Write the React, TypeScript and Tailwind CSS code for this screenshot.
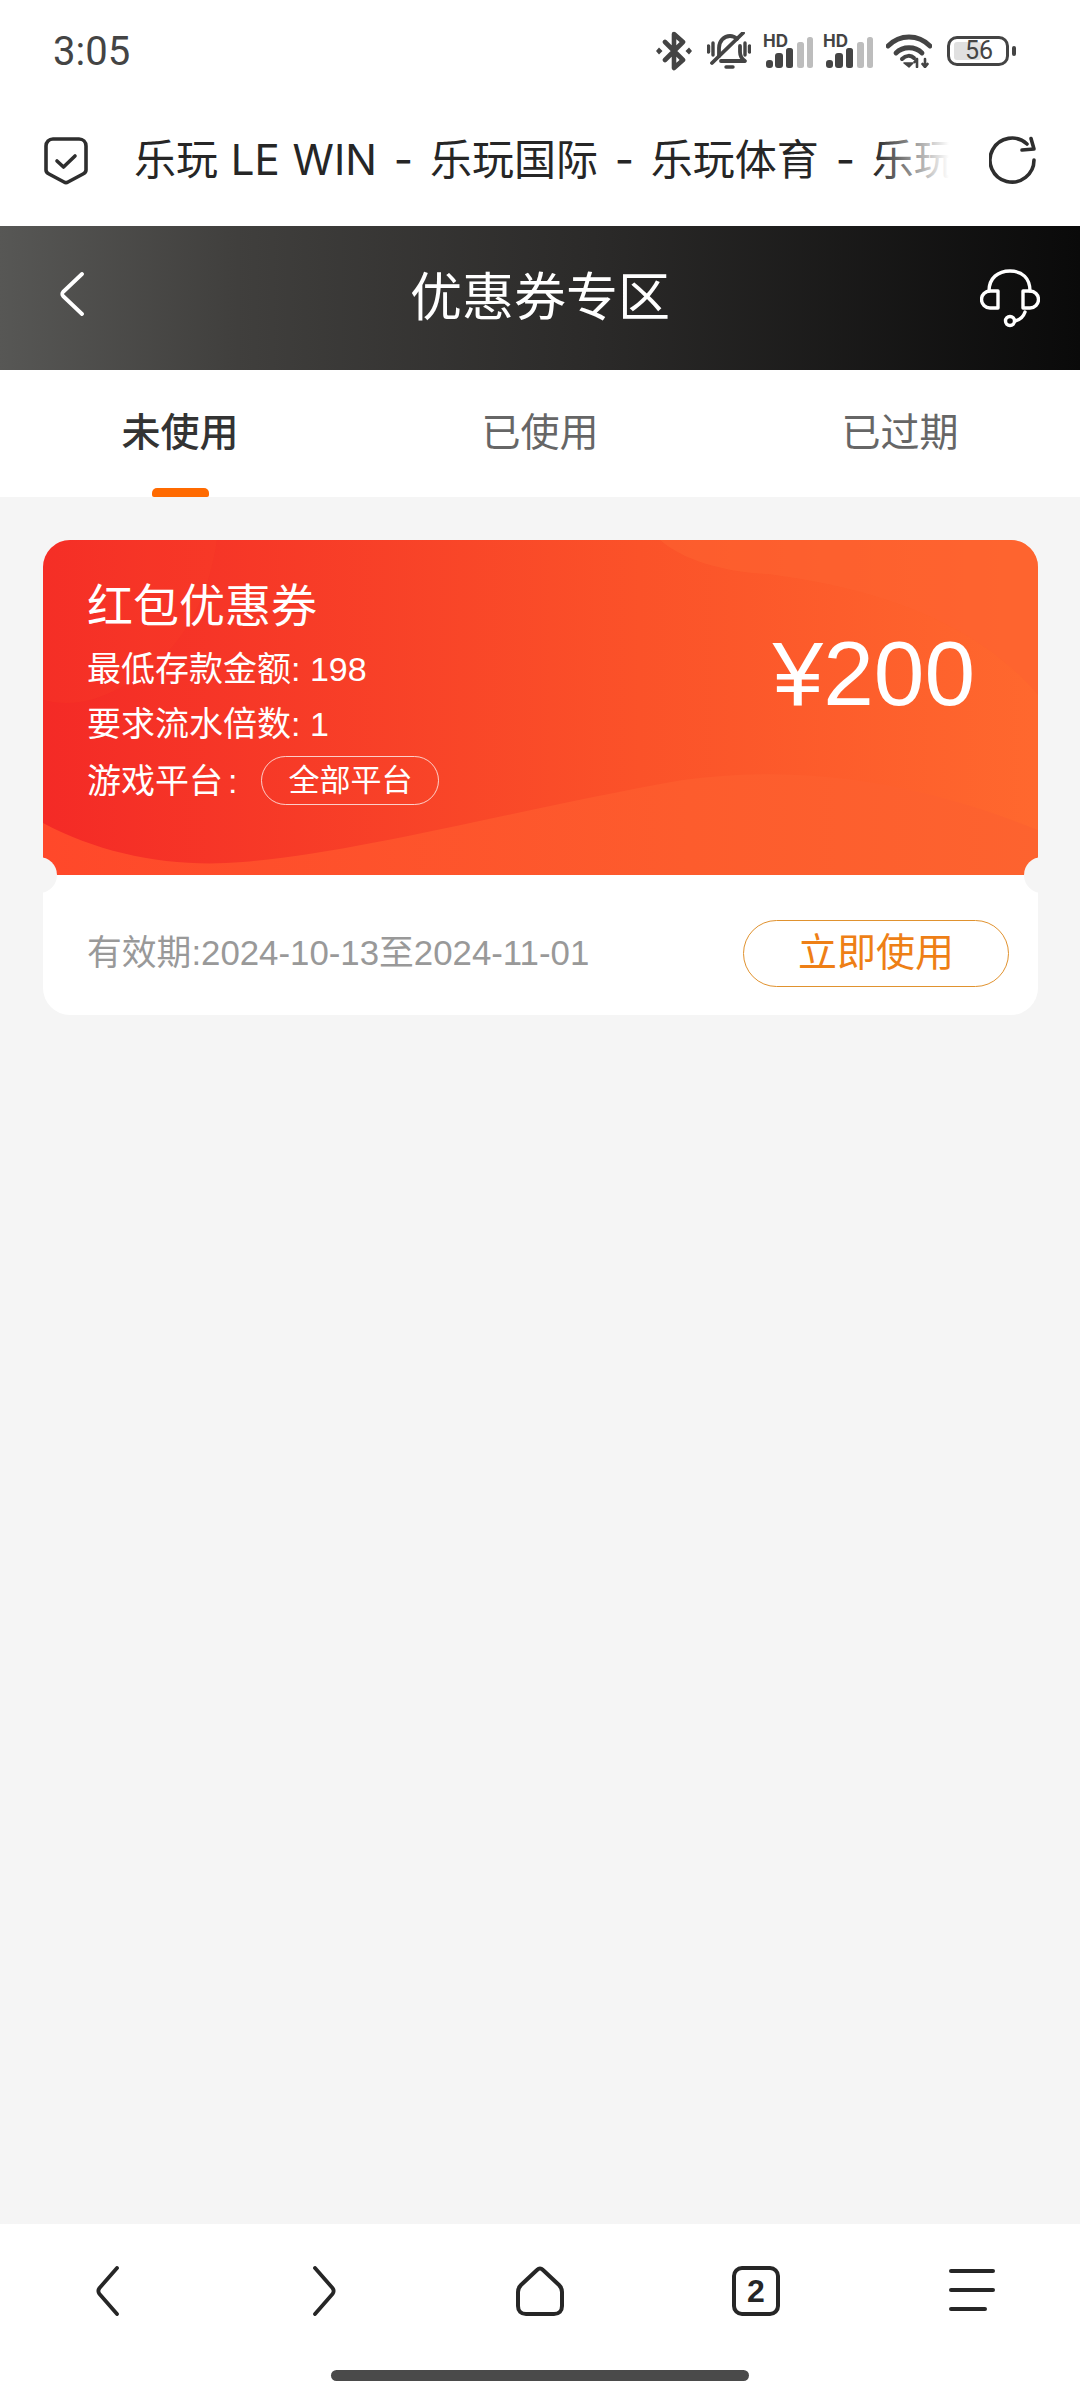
import React from "react";

const SANS = "font-['Liberation_Sans','Noto_Sans_CJK_SC',sans-serif]";

function Signal() {
  return (
    <div className="relative w-[50px] h-[33px]">
      <span className="absolute left-0 top-[-3px] text-[17px] leading-[18px] font-bold text-[#444] font-['Inter',sans-serif]">HD</span>
      <svg width="50" height="33" viewBox="0 0 50 33" className="absolute left-0 top-0">
        <rect x="3" y="25" width="7" height="8" rx="3" fill="#444" />
        <rect x="12" y="18" width="8" height="15" rx="3" fill="#444" />
        <rect x="23" y="13" width="7" height="20" rx="2.5" fill="#444" />
        <rect x="34" y="7" width="7" height="26" rx="2.5" fill="#bdbdbd" />
        <rect x="44" y="2" width="6" height="31" rx="2.5" fill="#bdbdbd" />
      </svg>
    </div>
  );
}

function StatusBar() {
  return (
    <div className="h-[100px] flex items-start justify-between bg-white pl-[53px] pr-[64px]">
      <span className="mt-[29px] text-[40px] leading-[46px] text-[#444] font-['Roboto',sans-serif]">3:05</span>
      <div className="flex items-center mt-[31px] h-[40px]">
        <svg width="36" height="40" viewBox="0 0 36 40" fill="none" stroke="#444" strokeWidth="4.6" strokeLinejoin="round" strokeLinecap="round">
          <path d="M9 11 L27 29 L18 37 V3 L27 11 L9 29" />
          <path d="M3 16.500 L6.500 20 L3 23.500 L0 20 Z M33 16.500 L36 20 L33 23.500 L29.500 20 Z" fill="#444" stroke="none" />
        </svg>
        <svg className="ml-[15px]" width="44" height="38" viewBox="0 0 44 38" fill="none" stroke="#444" strokeWidth="3.8" strokeLinecap="round" strokeLinejoin="round">
          <path d="M12 24 V16 C12 9 17 4 23 4 C26 4 28 5 30 7" />
          <path d="M33 14 V20 C33 24 35 27 38 29 H14" />
          <path d="M36 1 L5 31" strokeWidth="3.8" />
          <path d="M1.500 14 V20 M6 11 V23 M38 11 V23 M42.500 14 V20" strokeWidth="3.4" />
          <path d="M19 35 H26" strokeWidth="3.4" />
        </svg>
        <div className="ml-[12px]"><Signal /></div>
        <div className="ml-[10px]"><Signal /></div>
        <svg className="ml-[13px]" width="46" height="34" viewBox="0 0 46 34" fill="none" stroke="#444" strokeWidth="4.8" strokeLinecap="round">
          <path d="M2 12 C14 0 32 0 44 12" />
          <path d="M10 19 C17 12 29 12 36 19" />
          <path d="M16 25 C20 21 25 21 28 24" strokeWidth="4" />
          <path d="M23 33 L18 29 H27 Z" fill="#444" strokeWidth="1.500" strokeLinejoin="round" />
          <path d="M31 25 V33 M28.500 28 L31 25 M39 25 V33 M36.500 30 L39 33 L41.500 30" strokeWidth="2.6" />
        </svg>
        <div className="ml-[15px] relative w-[62px] h-[30px] rounded-[10px] border-[3px] border-[#444] flex items-center justify-center">
          <div className="absolute left-[4px] top-[3px] bottom-[3px] w-[27px] rounded-[3px] bg-[#e0e0e0]" />
          <span className="relative ml-[2px] text-[25px] leading-[26px] text-[#444] font-['Roboto',sans-serif]">56</span>
        </div>
        <div className="ml-[3px] w-[4px] h-[10px] rounded-[2px] bg-[#444]" />
      </div>
    </div>
  );
}

function AddressBar() {
  return (
    <div className="h-[126px] flex items-start bg-white pl-[44px]">
      <svg className="mt-[37px] shrink-0" width="44" height="48" viewBox="0 0 44 48" fill="none" stroke="#2e2e2e" strokeWidth="3.6" strokeLinecap="round" strokeLinejoin="round">
        <path d="M9 2 H35 C39 2 42 5 42 9 V33 C42 35 41 36 39 37 L24 45 C22.700 45.800 21.300 45.800 20 45 L5 37 C3 36 2 35 2 33 V9 C2 5 5 2 9 2 Z" />
        <path d="M13 24 L19.500 30 L31 19" />
      </svg>
      <div className="relative ml-[46px] w-[815px] h-[60px] mt-[30px] overflow-hidden shrink-0">
        <div className="whitespace-nowrap [word-spacing:5px] text-[42px] leading-[60px] text-[#262626] font-['Inter','Noto_Sans_CJK_SC',sans-serif]"><span className="[word-spacing:1px]">乐玩 LE WIN</span> - 乐玩国际 - 乐玩体育 - 乐玩</div>
        <div className="absolute right-0 top-0 bottom-0 w-[75px] bg-gradient-to-r from-transparent to-white" />
      </div>
      <svg className="ml-[40px] mt-[36px] shrink-0" width="48" height="48" viewBox="0 0 48 48" fill="none" stroke="#2e2e2e" strokeWidth="3.6" strokeLinecap="round" strokeLinejoin="round">
        <path d="M45 24 A22 22 0 1 1 38 8" />
        <path d="M33 14 L45 13 L42 2.500" />
      </svg>
    </div>
  );
}

function Header() {
  return (
    <div className="h-[144px] flex items-center justify-between pl-[60px] pr-[40px] bg-[linear-gradient(90deg,#575755_0%,#403f3d_22%,#2b2a29_55%,#0a0a0a_100%)]">
      <div className="w-[40px] mt-[-8px]">
        <svg className="block" width="24" height="44" viewBox="0 0 24 44" fill="none" stroke="#fff" strokeWidth="3.8" strokeLinecap="round" strokeLinejoin="round">
          <path d="M22 2 L3 20 C2 21 2 23 3 24 L22 42" />
        </svg>
      </div>
      <h1 className={`text-[52px] leading-[60px] text-white font-normal mt-[-1px] ${SANS}`}>优惠券专区</h1>
      <svg width="60" height="60" viewBox="0 0 60 60" fill="none" stroke="#fff" strokeWidth="3.4" strokeLinecap="round" strokeLinejoin="round">
        <path d="M18 23 H10 A8.500 8.500 0 0 0 10 40 H18 Z" />
        <path d="M43 23 H50 A8.500 8.500 0 0 1 50 40 H43 Z" />
        <path d="M9 23 C9 10 18 3 30 3 C42 3 50 10 50 23" />
        <path d="M45 44 C43 50 39 52 35 53" />
        <circle cx="30" cy="53" r="4.500" />
      </svg>
    </div>
  );
}

function Tabs() {
  const tab = "flex-1 flex flex-col items-center";
  return (
    <div className={`h-[127px] flex bg-white ${SANS}`}>
      <div className={tab}>
        <span className="mt-[39px] text-[39px] leading-[48px] font-medium text-[#333]">未使用</span>
        <span className="mt-[31px] w-[57px] h-[9px] rounded-t-[5px] rounded-b-[2px] bg-[#ff6a00]" />
      </div>
      <div className={tab}>
        <span className="mt-[39px] text-[39px] leading-[48px] text-[#666]">已使用</span>
      </div>
      <div className={tab}>
        <span className="mt-[39px] text-[39px] leading-[48px] text-[#666]">已过期</span>
      </div>
    </div>
  );
}

function Coupon() {
  return (
    <div className={`relative rounded-[27px] overflow-hidden bg-white ${SANS}`}>
      <div className="relative h-[335px] overflow-hidden bg-[linear-gradient(90deg,#f42a26_0%,#fb5229_60%,#ff682e_100%)]">
        <svg className="absolute inset-0" width="995" height="335" viewBox="0 0 995 335" fill="none">
          <defs>
            <linearGradient id="wave" x1="0" y1="0" x2="1" y2="0">
              <stop offset="0" stopColor="#ff482a" />
              <stop offset="0.65" stopColor="#fd5c2d" />
              <stop offset="1" stopColor="#fd632f" />
            </linearGradient>
          </defs>
          <path d="M0 0 H174 C165 60 140 110 90 140 C60 160 30 168 0 160 Z" fill="#ff5a2c" fillOpacity="0.1" />
          <path d="M617 0 C640 20 680 32 725 34 C850 50 940 90 995 155 V0 Z" fill="#fe6230" fillOpacity="0.6" />
          <path d="M0 283 C60 315 130 328 200 322 C320 312 470 270 640 240 C740 226 860 235 995 290 V335 H0 Z" fill="url(#wave)" />
        </svg>
        <div className="relative flex justify-between pl-[44px] pr-[63px]">
          <div className="flex flex-col pt-[38px]">
            <div className="text-[46px] leading-[56px] text-white">红包优惠券</div>
            <div className="mt-[13px] text-[34px] leading-[44px] text-white">最低存款金额: 198</div>
            <div className="mt-[11px] text-[34px] leading-[44px] text-white">要求流水倍数: 1</div>
            <div className="mt-[10px] flex items-center text-[34px] leading-[44px] text-white">
              <span>游戏平台</span>
              <span className="ml-[5px]">:</span>
              <span className="ml-[24px] w-[178px] h-[49px] rounded-full border border-white/75 flex items-center justify-center text-[31px] leading-[36px]">全部平台</span>
            </div>
          </div>
          <div className="mt-[84px] text-[91px] leading-[100px] text-white">¥200</div>
        </div>
      </div>
      <div className="h-[140px] flex items-center justify-between pl-[44px] pr-[29px] pt-[16px]">
        <span className="text-[34.8px] leading-[44px] text-[#999]">有效期:2024-10-13至2024-11-01</span>
        <button className="w-[266px] h-[67px] rounded-full border border-[#e0922f] flex items-center justify-center text-[39px] leading-[48px] text-[#ee7f16]">立即使用</button>
      </div>
      <span className="absolute left-[-24px] top-[317px] w-[38px] h-[36px] rounded-full bg-[#f5f5f5]" />
      <span className="absolute right-[-24px] top-[317px] w-[38px] h-[36px] rounded-full bg-[#f5f5f5]" />
    </div>
  );
}

function BottomNav() {
  const stroke = { fill: "none", stroke: "#262626", strokeLinecap: "round" as const, strokeLinejoin: "round" as const };
  const cell = "flex-1 flex justify-center";
  return (
    <div className="h-[176px] flex flex-col items-center bg-white">
      <div className="w-full h-[146px] flex items-start pt-[42px]">
        <div className={cell}>
          <svg width="24" height="50" viewBox="0 0 24 50" {...stroke} strokeWidth="3.8"><path d="M21 2 L3.500 22 C2 24 2 26 3.500 28 L21 48" /></svg>
        </div>
        <div className={cell}>
          <svg width="24" height="50" viewBox="0 0 24 50" {...stroke} strokeWidth="3.8"><path d="M3 2 L20.500 22 C22 24 22 26 20.500 28 L3 48" /></svg>
        </div>
        <div className={cell}>
          <svg width="48" height="50" viewBox="0 0 48 50" {...stroke} strokeWidth="4"><path d="M21 4 C23 2 25 2 27 4 L43 19 C45 21 46 23 46 26 V40 C46 45 43 48 38 48 H10 C5 48 2 45 2 40 V26 C2 23 3 21 5 19 Z" /></svg>
        </div>
        <div className={cell}>
          <div className="w-[48px] h-[50px] rounded-[10px] border-[4px] border-[#262626] flex items-center justify-center">
            <span className="text-[32px] leading-[36px] font-bold text-[#262626] font-['Liberation_Sans',sans-serif]">2</span>
          </div>
        </div>
        <div className={cell}>
          <div className="flex flex-col gap-[15px] w-[46px] mt-[3px]">
            <span className="block h-[4px] w-[46px] rounded-full bg-[#262626]" />
            <span className="block h-[4px] w-[46px] rounded-full bg-[#262626]" />
            <span className="block h-[4px] w-[38px] rounded-full bg-[#262626]" />
          </div>
        </div>
      </div>
      <div className="w-[418px] h-[11px] rounded-full bg-[#4a4a4a]" />
    </div>
  );
}

export default function App() {
  return (
    <div className="w-[1080px] h-[2400px] flex flex-col overflow-hidden bg-[#f5f5f5]">
      <StatusBar />
      <AddressBar />
      <Header />
      <Tabs />
      <main className="flex-1 pl-[43px] pr-[42px] pt-[43px]">
        <Coupon />
      </main>
      <BottomNav />
    </div>
  );
}
